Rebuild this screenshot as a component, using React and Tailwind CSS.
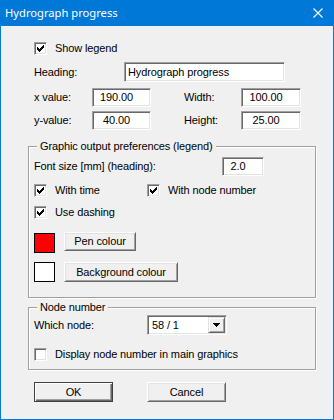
import React from "react";

const font = { fontFamily: '"Liberation Sans", Arial, sans-serif', letterSpacing: "-0.12px" };

function Check({ checked }) {
  return (
    <div className="w-[13px] h-[13px] shrink-0 bg-white border border-t-[#a0a0a0] border-l-[#a0a0a0] border-r-white border-b-white shadow-[inset_1px_1px_0_#696969,inset_-1px_-1px_0_#e3e3e3] relative">
      {checked && (
        <svg width="13" height="13" viewBox="0 0 13 13" className="absolute -left-px -top-px" shapeRendering="crispEdges">
          <rect x="3" y="5" width="1" height="3" fill="#000" />
          <rect x="4" y="6" width="1" height="3" fill="#000" />
          <rect x="5" y="7" width="1" height="3" fill="#000" />
          <rect x="6" y="6" width="1" height="3" fill="#000" />
          <rect x="7" y="5" width="1" height="3" fill="#000" />
          <rect x="8" y="4" width="1" height="3" fill="#000" />
          <rect x="9" y="3" width="1" height="3" fill="#000" />
        </svg>
      )}
    </div>
  );
}

function CheckRow({ checked, label, className = "" }) {
  return (
    <div className={"flex items-center h-[13px] " + className}>
      <Check checked={checked} />
      <span className="ml-[8px] text-[11px] leading-[13px] text-black whitespace-nowrap">{label}</span>
    </div>
  );
}

function Field({ value, className = "", align = "center" }) {
  return (
    <div
      className={
        "bg-white border border-t-[#a0a0a0] border-l-[#a0a0a0] border-r-white border-b-white shadow-[inset_1px_1px_0_#696969,inset_-1px_-1px_0_#e3e3e3] flex items-center text-[11px] leading-[13px] text-black whitespace-nowrap " +
        (align === "center" ? "justify-center pr-[10px] " : "pl-[3px] ") +
        className
      }
    >
      {value}
    </div>
  );
}

function Button({ label, className = "", isDefault = false }) {
  return (
    <div
      className={
        "flex items-center justify-center text-[11px] leading-[13px] text-black bg-[#f0f0f0] whitespace-nowrap " +
        (isDefault
          ? "border border-[#404040] shadow-[inset_1px_1px_0_#fff,inset_-1px_-1px_0_#696969,inset_-2px_-2px_0_#a0a0a0] "
          : "border border-t-white border-l-white border-r-[#696969] border-b-[#696969] shadow-[inset_1px_1px_0_#e3e3e3,inset_-1px_-1px_0_#a0a0a0] ") +
        className
      }
    >
      {label}
    </div>
  );
}

function Group({ label, className = "", children }) {
  return (
    <div className={"relative w-[288px] border border-[#a0a0a0] shadow-[inset_1px_1px_0_#fff,1px_1px_0_#fff] pl-[5px] " + className}>
      <span className="absolute left-[8px] -top-[7px] px-[3px] bg-[#f0f0f0] text-[11px] leading-[13px] text-black whitespace-nowrap">
        {label}
      </span>
      {children}
    </div>
  );
}

export default function App() {
  return (
    <div className="w-[334px] h-[420px] bg-[#0078d7] flex flex-col px-px pb-px" style={font}>
      <div className="h-[26px] flex items-center justify-between -mx-px">
        <span
          className="ml-[5px] text-white text-[11.2px] leading-[16px] tracking-normal"
          style={{ fontFamily: '"Noto Sans", "Open Sans", sans-serif' }}
        >
          Hydrograph progress
        </span>
        <svg width="10" height="10" viewBox="0 0 10 10" className="mr-[11px]">
          <path d="M0.5 0.5 L9.5 9.5 M9.5 0.5 L0.5 9.5" stroke="#fff" strokeWidth="1.1" />
        </svg>
      </div>
      <div className="flex-1 bg-[#f0f0f0] pl-[27px] flex flex-col">
        <CheckRow checked label="Show legend" className="mt-[16px] ml-[6px]" />

        <div className="mt-[7px] ml-[6px] h-[20px] flex items-center">
          <span className="w-[90px] text-[11px] leading-[13px]">Heading:</span>
          <Field value="Hydrograph progress" align="left" className="w-[161px] h-[20px]" />
        </div>

        <div className="mt-[6px] ml-[6px] h-[19px] flex items-center">
          <span className="w-[58px] text-[11px] leading-[13px]">x value:</span>
          <Field value="190.00" className="w-[59px] h-[19px]" />
          <span className="ml-[33px] w-[57px] text-[11px] leading-[13px]">Width:</span>
          <Field value="100.00" className="w-[60px] h-[19px]" />
        </div>

        <div className="mt-[4px] ml-[6px] h-[19px] flex items-center">
          <span className="w-[58px] text-[11px] leading-[13px]">y-value:</span>
          <Field value="40.00" className="w-[59px] h-[19px]" />
          <span className="ml-[33px] w-[57px] text-[11px] leading-[13px]">Height:</span>
          <Field value="25.00" className="w-[60px] h-[19px]" />
        </div>

        <Group label="Graphic output preferences (legend)" className="mt-[16px] h-[152px]">
          <div className="mt-[10px] h-[19px] flex items-center">
            <span className="w-[188px] text-[11px] leading-[13px]">Font size [mm] (heading):</span>
            <Field value="2.0" className="w-[42px] h-[19px]" />
          </div>
          <div className="mt-[8px] flex">
            <CheckRow checked label="With time" className="w-[113px]" />
            <CheckRow checked label="With node number" />
          </div>
          <CheckRow checked label="Use dashing" className="mt-[9px]" />
          <div className="mt-[13px] h-[21px] flex items-start">
            <div className="mt-px w-[21px] h-[20px] bg-[#ff0000] border border-black" />
            <Button label="Pen colour" className="ml-[9px] w-[72px] h-[19px]" />
          </div>
          <div className="mt-[9px] h-[20px] flex items-start">
            <div className="w-[21px] h-[20px] bg-white border border-black" />
            <Button label="Background colour" className="ml-[9px] w-[114px] h-[20px]" />
          </div>
        </Group>

        <Group label="Node number" className="mt-[9px] h-[63px]">
          <div className="mt-[7px] h-[20px] flex items-center">
            <span className="w-[113px] text-[11px] leading-[13px]">Which node:</span>
            <div className="w-[80px] h-[20px] bg-white border border-t-[#a0a0a0] border-l-[#a0a0a0] border-r-white border-b-white shadow-[inset_1px_1px_0_#696969,inset_-1px_-1px_0_#e3e3e3] flex items-stretch p-px">
              <span className="flex-1 pl-[3px] flex items-center text-[11px] leading-[13px]">58 / 1</span>
              <div className="w-[17px] flex items-center justify-center bg-[#f0f0f0] border border-t-[#e3e3e3] border-l-[#e3e3e3] border-r-[#696969] border-b-[#696969] shadow-[inset_1px_1px_0_#fff,inset_-1px_-1px_0_#a0a0a0]">
                <svg width="7" height="4" viewBox="0 0 7 4" shapeRendering="crispEdges">
                  <path d="M0 0 H7 L3.5 4 Z" fill="#000" />
                </svg>
              </div>
            </div>
          </div>
          <CheckRow label="Display node number in main graphics" className="mt-[13px]" />
        </Group>

        <div className="mt-[12px] ml-[6px] flex">
          <Button label="OK" isDefault className="w-[79px] h-[20px]" />
          <Button label="Cancel" className="ml-[34px] w-[79px] h-[20px]" />
        </div>
      </div>
    </div>
  );
}
